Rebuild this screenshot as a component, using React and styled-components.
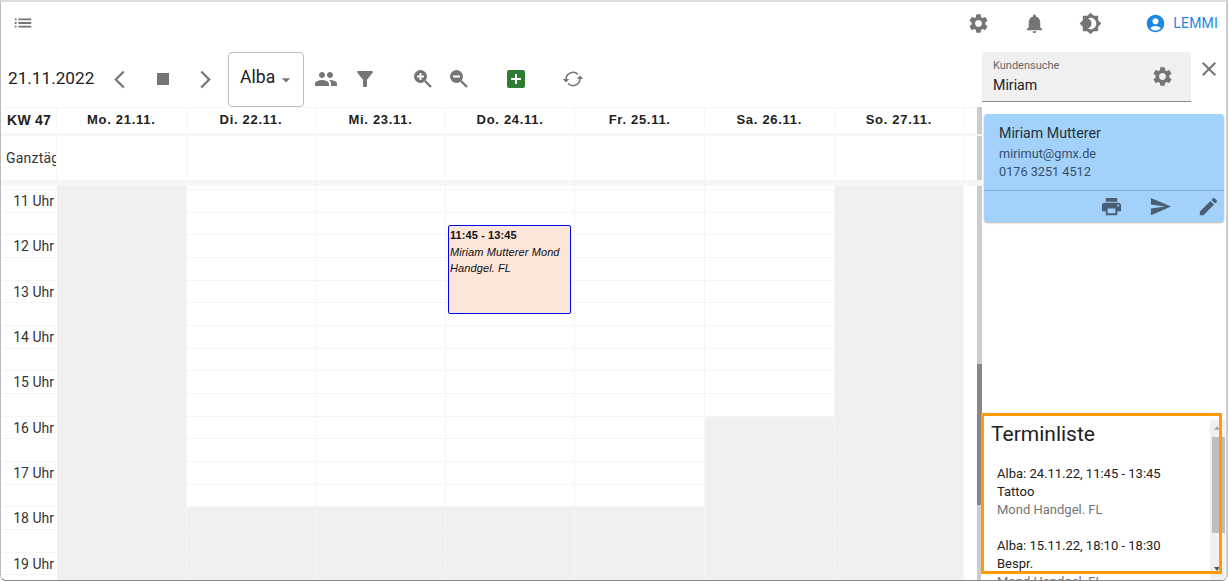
import React from "react";
import styled, { createGlobalStyle, css } from "styled-components";
import {
  MdList, MdSettings, MdNotifications, MdBrightness4, MdAccountCircle,
  MdArrowBackIosNew, MdArrowForwardIos, MdStop, MdPeople, MdFilterAlt,
  MdAddBox, MdArrowDropDown, MdClose, MdPrint, MdSend, MdEdit,
} from "react-icons/md";

const Global = createGlobalStyle`
  html, body { margin: 0; padding: 0; background: #fff; overflow: hidden; }
  * { box-sizing: border-box; }
`;

const Frame = styled.div`
  width: 1228px; height: 581px; overflow: hidden; display: flex; flex-direction: column;
  background: #fff; color: #212121; font-family: Roboto, "Liberation Sans", sans-serif;
  border-top: 2px solid #ddd; border-left: 1px solid #bbb; border-right: 2px solid #ccc;
  border-bottom: 1px solid #888; border-bottom-left-radius: 6px; border-bottom-right-radius: 6px;
`;
const TopBar = styled.header`
  height: 50px; flex: none; display: flex; align-items: center; padding: 0 8px 8px 11px; color: #757575;
`;
const Spacer = styled.div`flex: 1;`;
const TopIcon = styled.span`
  display: flex; width: 24px; justify-content: center; margin-right: ${p => p.$gap}px;
`;
const UserLink = styled.span`
  display: flex; align-items: center; gap: 7px; color: #1e88e5; font-size: 14px; letter-spacing: .2px;
`;
const Body = styled.div`flex: 1; min-height: 0; display: flex;`;
const Main = styled.main`width: 981px; flex: none; display: flex; flex-direction: column;`;
const Tools = styled.div`
  height: 55px; flex: none; display: flex; align-items: center; color: #757575; padding: 0 0 1px 7px;
`;
const DateLabel = styled.span`font-size: 17.2px; color: #212121; width: 99px; padding-bottom: 2px;`;
const ToolIcon = styled.span`
  display: flex; width: ${p => p.$w || 24}px; justify-content: center; margin-right: ${p => p.$gap || 0}px;
  color: ${p => p.$color || "inherit"};
`;
const Select = styled.div`
  width: 76px; height: 55px; align-self: flex-start; border: 1px solid #bdbdbd; border-radius: 4px;
  display: flex; align-items: center; padding: 0 0 5px 11px; font-size: 17.6px; color: #212121;
  margin: 0 10px 0 0; flex: none;
  svg { color: #757575; margin-left: 1px; margin-top: 5px; }
`;
const Calendar = styled.div`flex: 1; min-height: 0; display: flex; overflow: hidden;`;
const Sheet = styled.div`width: 976px; flex: none; position: relative; overflow: hidden;`;
const Rail = styled.div`
  width: 5px; flex: none;
  background: linear-gradient(
    #ccc 0, #ccc 27px, #f6f6f3 27px, #f6f6f3 29px, #ccc 29px, #ccc 73px, #f6f6f3 73px, #f6f6f3 79px,
    #ccc 79px, #ccc 257px, #888 257px, #888 398px, #ccc 398px, #ccc 100%
  );
`;
const Cols = "56px repeat(7, 129.6px)";
const HeadRow = styled.div`
  display: grid; grid-template-columns: ${Cols} 13px; height: 26px; border-top: 1px solid #f5f5f5; padding-bottom: 2px;
`;
const HeadCell = styled.div`
  font: bold 13px "Liberation Sans", Arial, sans-serif; letter-spacing: .7px; color: #212121;
  display: flex; align-items: center; justify-content: center; border-right: 1px solid #f5f5f5;
  &:first-child { font-size: 14px; letter-spacing: .2px; padding-left: 1px; }
  &:last-child { border: 0; }
`;
const Band = styled.div`height: ${p => p.$h}px; background: #f6f6f3;`;
const AllDay = styled.div`display: grid; grid-template-columns: ${Cols}; height: 44px;`;
const AllDayCell = styled.div`
  border-right: 1px solid #f5f5f5; font-size: 14px; letter-spacing: .2px; color: #333; padding: 0 0 0 5px;
  display: flex; align-items: center; overflow: hidden; white-space: nowrap;
`;
const Grid = styled.div`
  display: grid; grid-template-columns: ${Cols}; grid-template-rows: 4px repeat(18, 22.67px); position: relative;
`;
const TimeCell = styled.div`
  border-bottom: 1px solid #f5f5f5; font-size: 14px; color: #333; text-align: right; padding-right: 3px;
  white-space: nowrap; line-height: 22px; overflow: hidden;
`;
const Slot = styled.div`
  border-right: 1px solid #f5f5f5; border-bottom: 1px solid #f5f5f5;
  background: ${p => (p.$off ? "#f0f0f0" : "#fff")};
  ${p => p.$off && css`border-right-color: #f6f6f6; border-bottom-color: #eeeeee;`}
`;
const Event = styled.div`
  position: absolute; left: 447px; top: 39px; width: 123px; height: 89px; background: #fce5d9;
  border: 1px solid #0000f0; border-radius: 2px; font: italic 11px/16.5px "Liberation Sans", Arial, sans-serif;
  letter-spacing: .1px; color: #111; padding: 1px;
`;
const EventTime = styled.div`font-style: normal; font-weight: bold;`;

const Side = styled.aside`flex: 1; min-width: 0; display: flex; flex-direction: column; position: relative;`;
const SearchRow = styled.div`display: flex; height: 62px; flex: none;`;
const Search = styled.div`
  width: 209px; height: 50px; background: #f0f0f0; border-bottom: 1px solid #8a8a8a;
  border-radius: 4px 4px 0 0; padding: 7px 0 0 11px; position: relative;
  svg { position: absolute; right: 17px; top: 13px; color: #757575; }
`;
const SearchLabel = styled.div`font-size: 11px; color: #666; line-height: 14px;`;
const SearchValue = styled.div`font-size: 14.2px; color: #212121; line-height: 24px;`;
const CloseBox = styled.span`display: flex; color: #757575; margin: 5px 0 0 6px; height: 24px;`;
const Card = styled.section`
  margin-left: 2px; width: 240px; height: 108px; background: #a2d1fa; border-radius: 4px; flex: none;
  box-shadow: 0 1px 2px rgba(0,0,0,.3); display: flex; flex-direction: column;
`;
const CardInfo = styled.div`height: 77px; padding: 9px 0 0 15px; border-bottom: 1px solid #86b4dc; flex: none;`;
const CardName = styled.div`font-size: 14.2px; line-height: 20px; color: #263238;`;
const CardLine = styled.div`font-size: 12.7px; line-height: 17.5px; color: #37506b; margin-top: ${p => p.$top || 0}px;`;
const CardActions = styled.div`flex: 1; display: flex; align-items: center; justify-content: flex-end; gap: 25.5px; color: #4a6072; padding-right: 4px;`;
const ListBox = styled.section`
  position: absolute; left: -1px; top: 361px; width: 244px; bottom: 0; overflow: hidden; padding: 7px 0 0 10px; background: #fff;
`;
const ListOutline = styled.div`
  position: absolute; left: 0; top: 0; width: 241px; height: 161px; border: 3px solid #ff9a0a; z-index: 2;
`;
const ListTitle = styled.h2`font-size: 21px; font-weight: 400; line-height: 28px; margin: 0 0 17px; color: #212121;`;
const Appt = styled.div`margin: 0 0 18px 6px; font-size: 13px; line-height: 18px; color: #212121;`;
const ApptPlace = styled.div`color: #757575;`;
const ScrollTrack = styled.div`
  position: absolute; left: 229px; top: 7px; bottom: 0; width: 15px; background: #f0f0f0;
`;
const ScrollThumb = styled.div`
  position: absolute; left: 2px; width: 13px; top: 17px; height: 96px; background: #bdbdbd;
`;
const Arrow = styled.div`
  position: absolute; left: 4px; width: 0; height: 0; border-left: 3px solid transparent; border-right: 3px solid transparent;
  ${p => p.$up ? css`top: 6px; border-bottom: 4px solid #aaa;` : css`top: 147px; border-top: 4px solid #555;`}
`;

const ZoomIcon = ({ plus }) => (
  <svg width="24" height="24" viewBox="0 0 24 24">
    <circle cx="9.5" cy="9.5" r="6.5" fill="currentColor" />
    <path d="M14 14l6 6" stroke="currentColor" strokeWidth="2.4" fill="none" />
    <path d={plus ? "M6 9.5h7M9.5 6v7" : "M6 9.5h7"} stroke="#fff" strokeWidth="1.8" fill="none" />
  </svg>
);
const SyncIcon = () => (
  <svg width="24" height="24" viewBox="0 0 24 24" fill="none">
    <path d="M5 12.5a7 7 0 0 1 12-5" stroke="currentColor" strokeWidth="1.5" />
    <path d="M19 11.5a7 7 0 0 1-12 5" stroke="currentColor" strokeWidth="1.5" />
    <path d="M1.8 12h6.4L5 15.5zM15.8 12h6.4L19 8.5z" fill="currentColor" />
  </svg>
);

const days = ["Mo. 21.11.", "Di. 22.11.", "Mi. 23.11.", "Do. 24.11.", "Fr. 25.11.", "Sa. 26.11.", "So. 27.11."];
const hours = [11, 12, 13, 14, 15, 16, 17, 18, 19];
const rows = Array.from({ length: 19 }, (_, i) => i);

const isOff = (day, row) => day === 0 || day === 6 || (day === 5 && row >= 11) || row >= 15;
const labelFor = row => (row % 2 === 1 ? `${hours[(row - 1) / 2]} Uhr` : "");

export default function App() {
  return (
    <Frame>
      <Global />
      <TopBar>
        <MdList size={22} />
        <Spacer />
        <TopIcon $gap={32}><MdSettings size={23} /></TopIcon>
        <TopIcon $gap={32}><MdNotifications size={23} /></TopIcon>
        <TopIcon $gap={43}><MdBrightness4 size={23} /></TopIcon>
        <UserLink><MdAccountCircle size={21} />LEMMI</UserLink>
      </TopBar>
      <Body>
        <Main>
          <Tools>
            <DateLabel>21.11.2022</DateLabel>
            <ToolIcon $w={24} $gap={20}><MdArrowBackIosNew size={21} /></ToolIcon>
            <ToolIcon $w={24} $gap={18}><MdStop size={24} /></ToolIcon>
            <ToolIcon $w={24} $gap={11}><MdArrowForwardIos size={21} /></ToolIcon>
            <Select>Alba<MdArrowDropDown size={20} /></Select>
            <ToolIcon $w={24} $gap={15}><MdPeople size={24} /></ToolIcon>
            <ToolIcon $w={24} $gap={34}><MdFilterAlt size={24} /></ToolIcon>
            <ToolIcon $w={24} $gap={12}><ZoomIcon plus /></ToolIcon>
            <ToolIcon $w={24} $gap={33}><ZoomIcon /></ToolIcon>
            <ToolIcon $w={24} $gap={33} $color="#2e7d32"><MdAddBox size={24} /></ToolIcon>
            <ToolIcon $w={24}><SyncIcon /></ToolIcon>
          </Tools>
          <Calendar>
            <Sheet>
              <HeadRow>
                <HeadCell>KW 47</HeadCell>
                {days.map(d => <HeadCell key={d}>{d}</HeadCell>)}
                <HeadCell />
              </HeadRow>
              <Band $h={3} />
              <AllDay>
                <AllDayCell>Ganztägig</AllDayCell>
                {days.map(d => <AllDayCell key={d} />)}
              </AllDay>
              <Band $h={6} />
              <Grid>
                {rows.map(r => (
                  <React.Fragment key={r}>
                    <TimeCell>{labelFor(r)}</TimeCell>
                    {days.map((d, i) => <Slot key={d} $off={isOff(i, r)} />)}
                  </React.Fragment>
                ))}
                <Event>
                  <EventTime>11:45 - 13:45</EventTime>
                  Miriam Mutterer Mond Handgel. FL
                </Event>
              </Grid>
            </Sheet>
            <Rail />
          </Calendar>
        </Main>
        <Side>
          <SearchRow>
            <Search>
              <SearchLabel>Kundensuche</SearchLabel>
              <SearchValue>Miriam</SearchValue>
              <MdSettings size={23} />
            </Search>
            <CloseBox><MdClose size={24} /></CloseBox>
          </SearchRow>
          <Card>
            <CardInfo>
              <CardName>Miriam Mutterer</CardName>
              <CardLine $top={2}>mirimut@gmx.de</CardLine>
              <CardLine>0176 3251 4512</CardLine>
            </CardInfo>
            <CardActions>
              <MdPrint size={23} />
              <MdSend size={23} />
              <MdEdit size={23} />
            </CardActions>
          </Card>
          <ListBox>
            <ListTitle>Terminliste</ListTitle>
            <Appt>Alba: 24.11.22, 11:45 - 13:45<br />Tattoo<ApptPlace>Mond Handgel. FL</ApptPlace></Appt>
            <Appt>Alba: 15.11.22, 18:10 - 18:30<br />Bespr.<ApptPlace>Mond Handgel. FL</ApptPlace></Appt>
            <ScrollTrack>
              <Arrow $up />
              <ScrollThumb />
              <Arrow />
            </ScrollTrack>
            <ListOutline />
          </ListBox>
        </Side>
      </Body>
    </Frame>
  );
}
